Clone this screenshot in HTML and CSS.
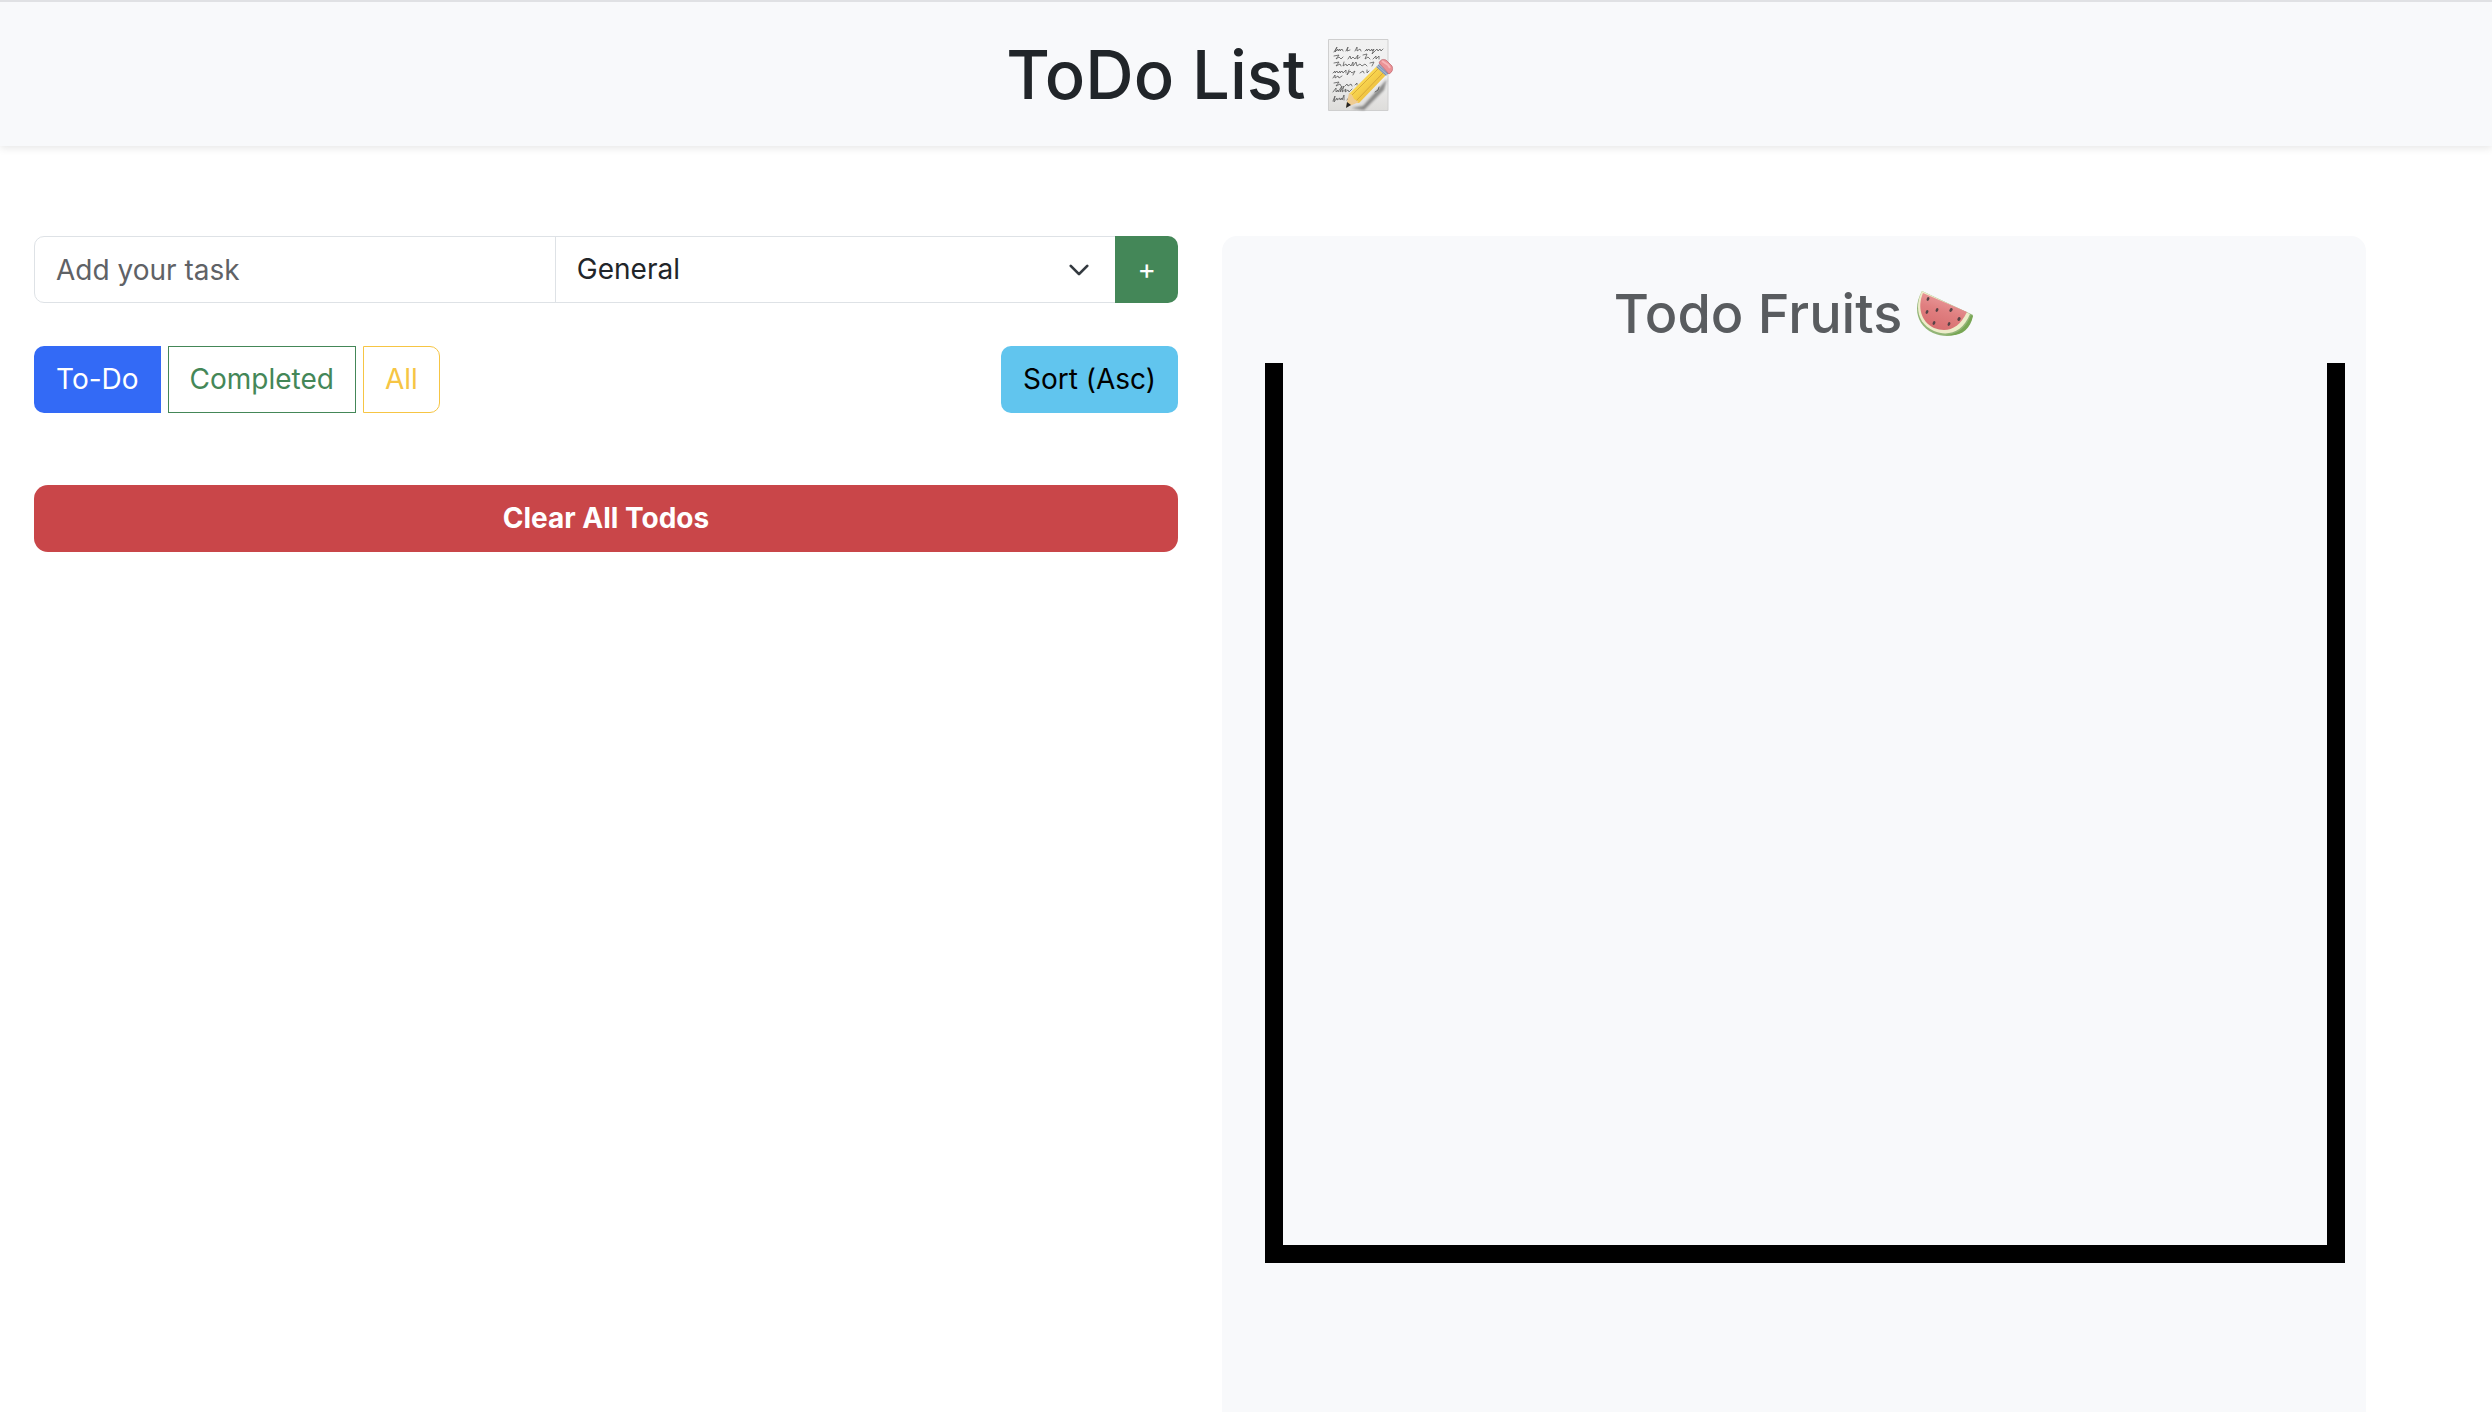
FILE: index.html
```html
<!DOCTYPE html>
<html lang="en">
<head>
<meta charset="utf-8">
<meta name="viewport" content="width=device-width, initial-scale=1">
<title>ToDo List</title>
<link rel="stylesheet" href="styles.css">
</head>
<body>
<header class="site-header">
  <div class="container">
    <h1 class="site-title">ToDo List
      <svg class="memo-icon" viewBox="0 0 66 74" aria-hidden="true">
        <defs>
          <linearGradient id="paper" x1="0" y1="0" x2="0" y2="1"><stop offset="0" stop-color="#f1f1f1"/><stop offset=".5" stop-color="#f0f0f0"/><stop offset="1" stop-color="#dddcda"/></linearGradient>
          <linearGradient id="wood" x1="0" y1="0" x2="1" y2="1"><stop offset="0" stop-color="#e3b332"/><stop offset=".4" stop-color="#f9d650"/><stop offset=".65" stop-color="#efc241"/><stop offset="1" stop-color="#b9892b"/></linearGradient>
          <filter id="soft" x="-20%" y="-20%" width="140%" height="140%"><feGaussianBlur stdDeviation="1"/></filter>
        </defs>
        <path d="M.5 1.5h59.500v71H.5z" fill="url(#paper)" stroke="#cfcfcf"/>
        <g fill="none" stroke="#5b5b5b" stroke-width=".8" stroke-linecap="round" stroke-linejoin="round">
          <path d="M6 14l3-5-2 5 3-3v2l2-2v2l2-2 1 2M18 13l2-4-1 4 3-1M27 13l2-4v4l3-2 1 2M37 13l2-2v2l2-2 1 2 2-2v2l2-2-2 5 5-5 1 2 2-2 1 2 2-2"/>
          <path d="M6 18l5-1-3 4 3-2 2 2 2-2M20 21l2-3 1 3 2-2 2 2 3-4-1 4 3-2M35 17l4-1-2 5 3-2 2 2M45 21l3-3v3l3-3v3"/>
          <path d="M6 25l5-1-3 4 4-2 1 2M16 24l-1 4 3-2 1 2 2-2 2 2 2-4v4l3-4 1 4 3-2 2 2 3-2 2 2M42 25l4-1-2 4"/>
          <path d="M5 35l2-2v2l2-2 1 2 2-2v2l2-2 1 2 3-3v3M21 32l-2 5 3-4 2 2 3-2-2 4M32 35l3-2 1 2M39 32v3l2-2M5 40l2-3v3l3-2 1 2 3-2"/>
          <path d="M6 45l5-1-3 4 4-2 1 2M17 48l2-2 1 2 3-2 1 2M27 47l2-2v2"/>
          <path d="M5 54l3-4v4l2-2v2l4-6-2 6 4-6-2 6 4-3-1 3 3-2 1 2 3-3M47 54l3-2 1-3"/>
          <path d="M5 63l2-5-1 6 3-4v2l3-2v2l2-2v2l2-5v5M19 62l3-4-2 6 3-2"/>
        </g>
        <path d="M23 70l12-2 24-27-3 11-20 20z" fill="#333" opacity=".5" filter="url(#soft)"/>
        <path d="M21 56L49 28l9 9-27 28-7-1z" fill="url(#wood)"/>
        <path d="M23 58l28-28M28 63l27-28" fill="none" stroke="#c99831" stroke-width=".7"/>
        <path d="M21 55l3 2 2 4 5 3-7 3-6 2z" fill="#efcc91"/>
        <path d="M19 64l4 3-5 3z" fill="#242424"/>
        <path d="M48 29l4-4 10 9-4 4z" fill="#a3b3cd"/>
        <path d="M50 27l10 9M49 29l9 8" stroke="#7185a5" fill="none" stroke-width=".8"/>
        <path d="M51 25q2-5 7-3l6 6q2 5-3 8z" fill="#eb9296" stroke="#bd666e" stroke-width=".7"/>
        <path d="M54 23l6 4 2 3" stroke="#f7b5b7" stroke-width="2" fill="none"/>
      </svg>
    </h1>
  </div>
</header>
<main class="container board">
  <section class="tasks">
    <form class="add-form">
      <input class="task-input" type="text" placeholder="Add your task" aria-label="Task">
      <select class="category" aria-label="Category"><option>General</option></select>
      <button class="btn btn-add" type="button" aria-label="Add task">+</button>
    </form>
    <div class="toolbar">
      <div class="filters" role="group" aria-label="Filter tasks">
        <button class="btn btn-todo" type="button">To-Do</button>
        <button class="btn btn-completed" type="button">Completed</button>
        <button class="btn btn-all" type="button">All</button>
      </div>
      <button class="btn btn-sort" type="button">Sort (Asc)</button>
    </div>
    <button class="btn btn-clear" type="button">Clear All Todos</button>
  </section>
  <section class="fruits">
    <h2 class="fruits-title">Todo Fruits
      <svg class="melon-icon" viewBox="0 0 58 48" aria-hidden="true">
        <defs>
          <linearGradient id="flesh" x1=".7" y1="0" x2=".3" y2="1"><stop offset="0" stop-color="#eca3a3"/><stop offset=".5" stop-color="#e07f80"/><stop offset="1" stop-color="#d76d6f"/></linearGradient>
        </defs>
        <path d="M6 1C-3 17 0 35 17 43c16 7 35 2 40-18z" fill="#92b577"/>
        <path d="M6 1C-2 17 2 34 18 41c14 6 29 1 36-17z" fill="#edecc9"/>
        <path d="M30 45c12-1 20-7 25-20l2 1c-3 14-12 21-27 19z" fill="#78a654"/>
        <path d="M7 3C1 17 5 32 18 38c13 5 25 1 33-16z" fill="url(#flesh)"/>
        <g fill="#574346"><ellipse cx="12" cy="9" rx="1.300" ry="2" transform="rotate(25 12 9)"/><ellipse cx="11" cy="22" rx="1.300" ry="2" transform="rotate(25 11 22)"/><ellipse cx="21" cy="20" rx="1.300" ry="2" transform="rotate(25 21 20)"/><ellipse cx="35" cy="20" rx="1.500" ry="2" transform="rotate(35 35 20)"/><ellipse cx="43" cy="29" rx="1.500" ry="2" transform="rotate(30 43 29)"/><ellipse cx="18" cy="33" rx="1.300" ry="2" transform="rotate(25 18 33)"/><ellipse cx="33" cy="34" rx="1.300" ry="2" transform="rotate(25 33 34)"/></g>
      </svg>
    </h2>
    <div class="basket"></div>
  </section>
</main>
</body>
</html>
```
FILE: styles.css
```css
*, *::before, *::after { box-sizing: border-box; }

body {
  margin: 0;
  min-height: 100vh;
  display: flex;
  flex-direction: column;
  background: #fff;
  color: #212529;
  font-family: Inter, "Liberation Sans", sans-serif;
  font-size: 28px;
  line-height: 43px;
}

.container {
  width: 100%;
  max-width: 2400px;
  padding: 0 34px;
}

.site-header {
  padding: 31px 0 29px;
  border-top: 2px solid #e0e1e4;
  background: #f8f9fb;
  box-shadow: 0 2px 8px rgba(0, 0, 0, .1);
}

.site-title, .fruits-title {
  display: flex;
  align-items: center;
  justify-content: center;
  margin: 0;
  font-weight: 500;
}

.site-title {
  gap: 22px;
  font-size: 67px;
  line-height: 84px;
}

.memo-icon { width: 66px; height: 74px; }

.board {
  flex: 1;
  display: grid;
  grid-template-columns: 1fr 1fr;
  gap: 44px;
  padding-top: 90px;
}

.add-form { display: flex; }

.task-input, .category {
  min-width: 0;
  height: 67px;
  padding: 0 21px;
  border: 1px solid #dee2e6;
  background: #fff;
  color: #212529;
  font: inherit;
}

.task-input {
  flex: 12 1 0;
  border-radius: 10px 0 0 10px;
}

.task-input::placeholder { color: #5f6266; opacity: 1; }

.category {
  flex: 13 1 0;
  border-width: 1px 0 1px 1px;
  margin-left: -1px;
  border-radius: 0;
  appearance: none;
  background: #fff url("data:image/svg+xml,%3Csvg xmlns='http://www.w3.org/2000/svg' viewBox='0 0 16 16'%3E%3Cpath fill='none' stroke='%23343a40' stroke-linecap='round' stroke-linejoin='round' stroke-width='2' d='m2 5 6 6 6-6'/%3E%3C/svg%3E") no-repeat right 25px center / 22px 22px;
}

.btn {
  height: 67px;
  padding: 0 21px;
  border: 1px solid transparent;
  border-radius: 10px;
  background: transparent;
  font: inherit;
  text-align: center;
  white-space: nowrap;
}

.btn-add {
  border-radius: 0 10px 10px 0;
  background: #448758;
  color: #fff;
}

.toolbar {
  display: flex;
  justify-content: space-between;
  margin: 43px 0 72px;
}

.filters { display: flex; gap: 7px; }

.btn-todo { border-radius: 10px 0 0 10px; background: #336af6; color: #fff; }
.btn-completed { border-color: #448758; border-radius: 0; color: #448758; }
.btn-all { border-color: #f6c544; border-radius: 0 10px 10px 0; color: #f6c544; }
.btn-sort { background: #61c5ee; color: #000; }

.btn-clear {
  width: 100%;
  border-radius: 14px;
  background: #c94649;
  color: #fff;
  font-weight: 700;
}

.fruits {
  padding: 43px 43px 0;
  border-radius: 15px 15px 0 0;
  background: #f8f9fb;
}

.fruits-title {
  gap: 14px;
  margin-bottom: 14px;
  color: #595c5f;
  font-size: 54px;
  line-height: 70px;
}

.melon-icon { width: 58px; height: 48px; }

.basket {
  height: 900px;
  margin-right: -22px;
  border: 18px solid #000;
  border-top: 0;
}
```
